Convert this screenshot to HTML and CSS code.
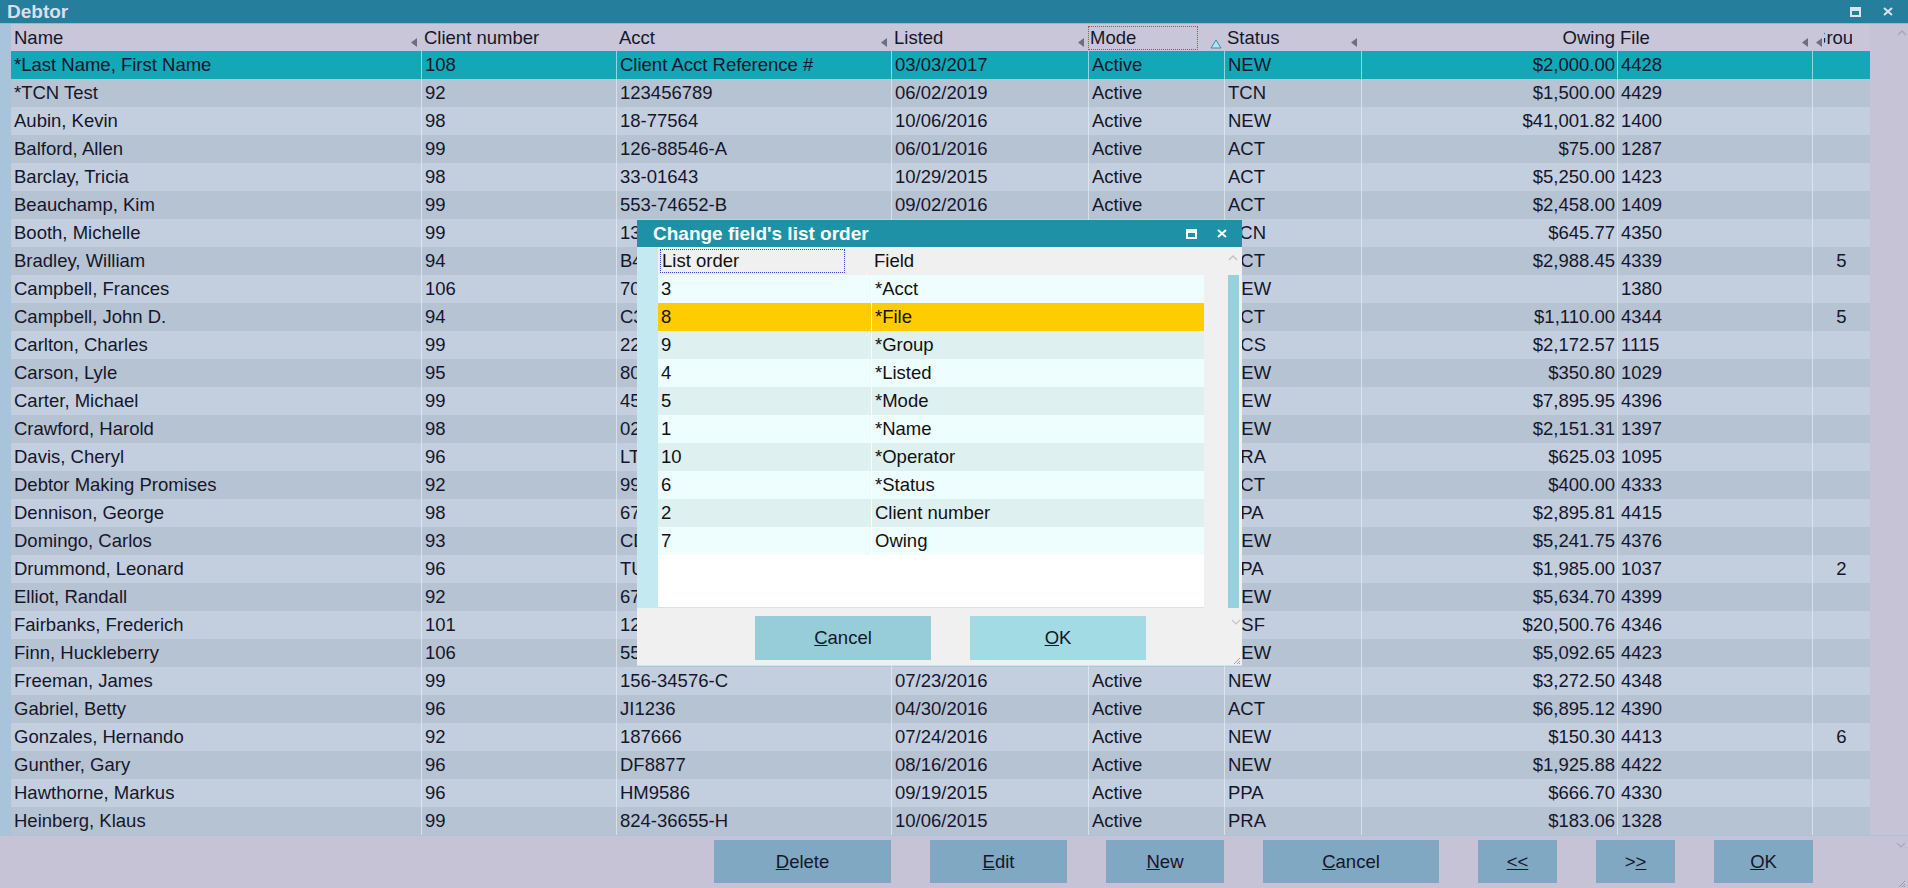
FILE: index.html
```html
<!DOCTYPE html>
<html lang="en">
<head>
    <meta charset="UTF-8">
    <title>Debtor</title>
    <link rel="stylesheet" href="styles.css">
</head>
<body>
<div class="window">
    <div class="titlebar">
        <span class="title">Debtor</span>
        <div class="win-btns">
            <svg width="11" height="10" viewBox="0 0 11 10"><path d="M0 0H11V10H0Z M2 4V8H9V4Z" fill="#dfe3ee" fill-rule="evenodd"/></svg>
            <svg width="10" height="9" viewBox="0 0 10 9"><path d="M1 1L9 8M9 1L1 8" stroke="#dfe3ee" stroke-width="2"/></svg>
        </div>
    </div>

    <div class="main">
        <div class="left-strip"></div>
        <div class="grid">
            <div class="row head">
                <div class="hcell">Name<svg class="arr" width="7" height="9" viewBox="0 0 7 9"><polygon points="6,0 0,4.5 6,9" fill="#6f6e7e"/></svg></div>
                <div class="hcell">Client number</div>
                <div class="hcell">Acct<svg class="arr" width="7" height="9" viewBox="0 0 7 9"><polygon points="6,0 0,4.5 6,9" fill="#6f6e7e"/></svg></div>
                <div class="hcell">Listed<svg class="arr" width="7" height="9" viewBox="0 0 7 9"><polygon points="6,0 0,4.5 6,9" fill="#6f6e7e"/></svg></div>
                <div class="hcell mode">
                    <span class="focus-red">Mode</span>
                    <svg class="sort-up" width="12" height="10" viewBox="0 0 12 10"><polygon points="6,1 11,9 1,9" fill="#aee3ef" stroke="#3c8ea4" stroke-width="1"/></svg>
                </div>
                <div class="hcell">Status<svg class="arr" width="7" height="9" viewBox="0 0 7 9"><polygon points="6,0 0,4.5 6,9" fill="#6f6e7e"/></svg></div>
                <div class="hcell right">Owing</div>
                <div class="hcell">File<svg class="arr" width="7" height="9" viewBox="0 0 7 9"><polygon points="6,0 0,4.5 6,9" fill="#6f6e7e"/></svg></div>
                <div class="hcell group"><svg class="arr" width="7" height="9" viewBox="0 0 7 9"><polygon points="6,0 0,4.5 6,9" fill="#6f6e7e"/></svg><span class="clip"><span>Group</span></span></div>
            </div>
            <div id="rows"></div>
        </div>
        <div class="gutter">
            <svg width="10" height="6" viewBox="0 0 10 6"><path d="M1 5L5 1L9 5" fill="none" stroke="#a9a8b8" stroke-width="1.5"/></svg>
        </div>
    </div>

    <div class="footer">
        <button class="btn w-delete"><u>D</u>elete</button>
        <button class="btn w-edit"><u>E</u>dit</button>
        <button class="btn w-new"><u>N</u>ew</button>
        <button class="btn w-cancel"><u>C</u>ancel</button>
        <button class="btn w-nav"><u>&lt;&lt;</u></button>
        <button class="btn w-nav">&gt;<u>&gt;</u></button>
        <button class="btn w-ok"><u>O</u>K</button>
        <div class="corner">
            <svg width="10" height="6" viewBox="0 0 10 6"><path d="M1 1L5 5L9 1" fill="none" stroke="#a9a8b8" stroke-width="1.2"/></svg>
            <svg width="8" height="8" viewBox="0 0 8 8"><path d="M7 1L1 7M7 4L4 7M7 6L6 7" stroke="#9a99aa" stroke-width="1"/></svg>
        </div>
    </div>

    <!-- modal dialog over the list -->
    <div class="dialog">
        <div class="dlg-title">
            <span>Change field's list order</span>
            <div class="win-btns dlg-btns">
                <svg width="11" height="10" viewBox="0 0 11 10"><path d="M0 0H11V10H0Z M2 4V8H9V4Z" fill="#ffffff" fill-rule="evenodd"/></svg>
                <svg width="10" height="9" viewBox="0 0 10 9"><path d="M1 1L9 8M9 1L1 8" stroke="#ffffff" stroke-width="2"/></svg>
            </div>
        </div>
        <div class="dlg-body">
            <div class="dlg-strip"></div>
            <div class="dlg-list">
                <div class="drow dhead">
                    <div class="dcell"><span class="focus-blue">List order</span></div>
                    <div class="dcell">Field</div>
                </div>
                <div id="drows"></div>
            </div>
            <div class="dlg-side">
                <svg class="caret" width="10" height="6" viewBox="0 0 10 6"><path d="M1 5L5 1L9 5" fill="none" stroke="#c4c4c4" stroke-width="1.5"/></svg>
                <div class="scrollbar"></div>
            </div>
        </div>
        <div class="dlg-foot">
            <button class="btn dbtn cancel"><u>C</u>ancel</button>
            <button class="btn dbtn ok"><u>O</u>K</button>
            <div class="dlg-corner">
                <svg width="10" height="6" viewBox="0 0 10 6"><path d="M1 1L5 5L9 1" fill="none" stroke="#c4c4c4" stroke-width="1.2"/></svg>
                <svg width="8" height="8" viewBox="0 0 8 8"><path d="M7 1L1 7M7 4L4 7M7 6L6 7" stroke="#a0a0a0" stroke-width="1"/></svg>
            </div>
        </div>
    </div>
</div>

<script>
    const debtors = [
        ['*Last Name, First Name', '108', 'Client Acct Reference #', '03/03/2017', 'Active', 'NEW', '$2,000.00', '4428', ''],
        ['*TCN Test', '92', '123456789', '06/02/2019', 'Active', 'TCN', '$1,500.00', '4429', ''],
        ['Aubin, Kevin', '98', '18-77564', '10/06/2016', 'Active', 'NEW', '$41,001.82', '1400', ''],
        ['Balford, Allen', '99', '126-88546-A', '06/01/2016', 'Active', 'ACT', '$75.00', '1287', ''],
        ['Barclay, Tricia', '98', '33-01643', '10/29/2015', 'Active', 'ACT', '$5,250.00', '1423', ''],
        ['Beauchamp, Kim', '99', '553-74652-B', '09/02/2016', 'Active', 'ACT', '$2,458.00', '1409', ''],
        ['Booth, Michelle', '99', '134-55210', '08/14/2016', 'Active', 'TCN', '$645.77', '4350', ''],
        ['Bradley, William', '94', 'B4471', '11/02/2016', 'Active', 'ACT', '$2,988.45', '4339', '5'],
        ['Campbell, Frances', '106', '70-33412', '05/17/2016', 'Active', 'NEW', '', '1380', ''],
        ['Campbell, John D.', '94', 'C3302', '02/11/2016', 'Active', 'ACT', '$1,110.00', '4344', '5'],
        ['Carlton, Charles', '99', '22-90871', '07/08/2015', 'Active', 'ACS', '$2,172.57', '1115', ''],
        ['Carson, Lyle', '95', '80-11249', '03/22/2016', 'Active', 'NEW', '$350.80', '1029', ''],
        ['Carter, Michael', '99', '45-66102', '09/14/2016', 'Active', 'NEW', '$7,895.95', '4396', ''],
        ['Crawford, Harold', '98', '02-77431', '12/01/2015', 'Active', 'NEW', '$2,151.31', '1397', ''],
        ['Davis, Cheryl', '96', 'LT4420', '01/19/2016', 'Active', 'PRA', '$625.03', '1095', ''],
        ['Debtor Making Promises', '92', '99-10023', '06/30/2016', 'Active', 'ACT', '$400.00', '4333', ''],
        ['Dennison, George', '98', '67-22108', '04/12/2016', 'Active', 'PPA', '$2,895.81', '4415', ''],
        ['Domingo, Carlos', '93', 'CD5561', '08/03/2016', 'Active', 'NEW', '$5,241.75', '4376', ''],
        ['Drummond, Leonard', '96', 'TU8812', '10/21/2015', 'Active', 'PPA', '$1,985.00', '1037', '2'],
        ['Elliot, Randall', '92', '67-45120', '07/29/2016', 'Active', 'NEW', '$5,634.70', '4399', ''],
        ['Fairbanks, Frederich', '101', '12-83307', '11/15/2015', 'Active', 'NSF', '$20,500.76', '4346', ''],
        ['Finn, Huckleberry', '106', '55-90214', '09/27/2016', 'Active', 'NEW', '$5,092.65', '4423', ''],
        ['Freeman, James', '99', '156-34576-C', '07/23/2016', 'Active', 'NEW', '$3,272.50', '4348', ''],
        ['Gabriel, Betty', '96', 'JI1236', '04/30/2016', 'Active', 'ACT', '$6,895.12', '4390', ''],
        ['Gonzales, Hernando', '92', '187666', '07/24/2016', 'Active', 'NEW', '$150.30', '4413', '6'],
        ['Gunther, Gary', '96', 'DF8877', '08/16/2016', 'Active', 'NEW', '$1,925.88', '4422', ''],
        ['Hawthorne, Markus', '96', 'HM9586', '09/19/2015', 'Active', 'PPA', '$666.70', '4330', ''],
        ['Heinberg, Klaus', '99', '824-36655-H', '10/06/2015', 'Active', 'PRA', '$183.06', '1328', '']
    ];

    const fields = [
        ['3', '*Acct'], ['8', '*File'], ['9', '*Group'], ['4', '*Listed'], ['5', '*Mode'],
        ['1', '*Name'], ['10', '*Operator'], ['6', '*Status'], ['2', 'Client number'], ['7', 'Owing']
    ];

    // main list
    const rowsEl = document.getElementById('rows');
    debtors.forEach(function(d, i) {
        const row = document.createElement('div');
        row.className = 'row ' + (i === 0 ? 'selected' : (i % 2 ? 'dark' : 'light'));
        d.forEach(function(v, c) {
            const cell = document.createElement('div');
            cell.className = 'cell' + (c === 6 ? ' right' : '') + (c === 8 ? ' center' : '');
            cell.textContent = v;
            row.appendChild(cell);
        });
        rowsEl.appendChild(row);
    });

    // dialog list
    const drowsEl = document.getElementById('drows');
    fields.forEach(function(f, i) {
        const row = document.createElement('div');
        row.className = 'drow ' + (i === 1 ? 'picked' : (i % 2 ? 'plain' : 'alt'));
        if (i === 0) row.className = 'drow plain';
        f.forEach(function(v) {
            const cell = document.createElement('div');
            cell.className = 'dcell';
            cell.textContent = v;
            row.appendChild(cell);
        });
        drowsEl.appendChild(row);
    });
</script>
</body>
</html>
```

FILE: styles.css
```css
* {
    box-sizing: border-box;
}
html, body {
    margin: 0;
    padding: 0;
}
body {
    font-family: "Liberation Sans", Arial, sans-serif;
    font-size: 18.5px;
    color: #16162a;
    background: #c5c3d5;
    overflow: hidden;
}
.window {
    position: relative;
    width: 1908px;
    height: 888px;
    display: flex;
    flex-direction: column;
}

/* title bar */
.titlebar {
    height: 24px;
    flex: none;
    background: #247e9c;
    border-bottom: 1px solid #9cb4ca;
    display: flex;
    align-items: center;
    justify-content: space-between;
    padding-left: 7px;
}
.titlebar .title {
    color: #dcdeec;
    font-weight: bold;
    font-size: 19px;
    line-height: 22px;
}
.win-btns {
    display: flex;
    align-items: center;
    gap: 22px;
    margin-right: 15px;
}

/* list */
.main {
    display: flex;
    flex: none;
    border-bottom: 1px solid #aac4da;
}
.left-strip {
    width: 11px;
    background: #a7c4da;
}
.grid {
    width: 1859px;
}
.gutter {
    flex: 1;
    display: flex;
    justify-content: center;
    padding: 6px 0 0 25px;
}
.row {
    display: grid;
    grid-template-columns: 410px 195px 275px 197px 136px 137px 256px 195px 58px;
    height: 28px;
    line-height: 28px;
}
.row.selected { background: #12a8b8; }
.row.dark { background: #b6c3d3; }
.row.light { background: #c3cfdf; }
.cell {
    padding: 0 3px;
    white-space: nowrap;
    overflow: hidden;
}
.cell + .cell {
    border-left: 1px solid rgba(236, 241, 248, 0.6);
}
.cell.right {
    text-align: right;
    padding-right: 2px;
}
.cell.center {
    text-align: center;
}

.head {
    height: 27px;
    line-height: 27px;
    background: #c8c6d8;
}
.hcell {
    display: flex;
    align-items: center;
    padding: 0 3px;
    white-space: nowrap;
    overflow: hidden;
}
.hcell.right {
    justify-content: flex-end;
    padding-right: 2px;
}
.hcell .arr {
    margin-left: auto;
    align-self: flex-end;
    margin-bottom: 4px;
    flex: none;
}
.hcell.mode {
    padding: 0 2px 0 0;
}
.focus-red {
    width: 110px;
    height: 24px;
    line-height: 22px;
    margin-top: 1px;
    border: 1px dotted #cf3a4c;
    padding-left: 1px;
}
.sort-up {
    margin-left: auto;
    align-self: flex-end;
    margin-bottom: 2px;
}
.hcell.group {
    padding: 0 0 0 4px;
}
.hcell.group .arr {
    margin-left: 0;
}
.clip {
    width: 28px;
    overflow: hidden;
    margin-left: 1px;
}
.clip span {
    display: inline-block;
    margin-left: -12px;
}

/* bottom buttons */
.footer {
    flex: 1;
    display: flex;
    justify-content: flex-end;
    align-items: flex-start;
    gap: 39px;
    padding-top: 4px;
}
.btn {
    font-family: inherit;
    font-size: 18.5px;
    color: #16162a;
    border: none;
    height: 43px;
    background: #80a8c3;
    padding: 0;
}
.w-delete { width: 177px; }
.w-edit { width: 137px; }
.w-new { width: 118px; }
.w-cancel { width: 176px; }
.w-nav { width: 79px; }
.w-ok { width: 99px; }
.corner {
    width: 95px;
    margin-left: -39px;
    height: 48px;
    display: flex;
    flex-direction: column;
    align-items: flex-end;
    justify-content: space-between;
    padding: 2px 2px 0 0;
}

/* dialog */
.dialog {
    position: absolute;
    left: 637px;
    top: 220px;
    width: 605px;
    height: 446px;
    background: #f0f0f0;
    border-bottom: 1px solid #c6e7ef;
    display: flex;
    flex-direction: column;
}
.dlg-title {
    height: 27px;
    background: #1f91a7;
    color: #ffffff;
    font-weight: bold;
    font-size: 19px;
    display: flex;
    align-items: center;
    justify-content: space-between;
    padding-left: 16px;
}
.dlg-btns {
    gap: 20px;
    margin-right: 15px;
}
.dlg-body {
    display: flex;
    height: 361px;
}
.dlg-strip {
    width: 21px;
    background: #c5e9f1;
}
.dlg-list {
    width: 546px;
    background: #ffffff;
    border-bottom: 1px solid #cfe6ec;
}
.drow {
    display: grid;
    grid-template-columns: 213px 333px;
    height: 28px;
    line-height: 28px;
    color: #111111;
}
.drow.plain { background: #eefefe; }
.drow.alt { background: #dff0f0; }
.drow.picked { background: #ffcc00; }
.dcell {
    padding-left: 3px;
    white-space: nowrap;
}
.dcell + .dcell {
    border-left: 1px solid #ffffff;
}
.dhead {
    background: #f0f0f0;
}
.dhead .dcell + .dcell {
    border-left: none;
}
.dhead .dcell:first-child {
    padding: 2px 0 0 2px;
}
.focus-blue {
    display: block;
    width: 185px;
    height: 24px;
    line-height: 22px;
    border: 1px dotted #2b4fd6;
    padding-left: 1px;
}
.dlg-side {
    flex: 1;
    display: flex;
    flex-direction: column;
    align-items: flex-end;
    padding-right: 3px;
}
.dlg-side .caret {
    margin: 8px 1px 14px 0;
}
.scrollbar {
    width: 11px;
    flex: 1;
    background: #98d0dc;
}
.dlg-foot {
    flex: 1;
    display: flex;
    align-items: flex-start;
    gap: 39px;
    padding: 8px 0 0 118px;
}
.dbtn {
    width: 176px;
    height: 44px;
}
.dbtn.cancel { background: #96cdd9; }
.dbtn.ok { background: #a2dbe3; }
.dlg-corner {
    margin-left: auto;
    height: 49px;
    display: flex;
    flex-direction: column;
    align-items: flex-end;
    justify-content: space-between;
    padding: 3px 1px 0 0;
}
```
